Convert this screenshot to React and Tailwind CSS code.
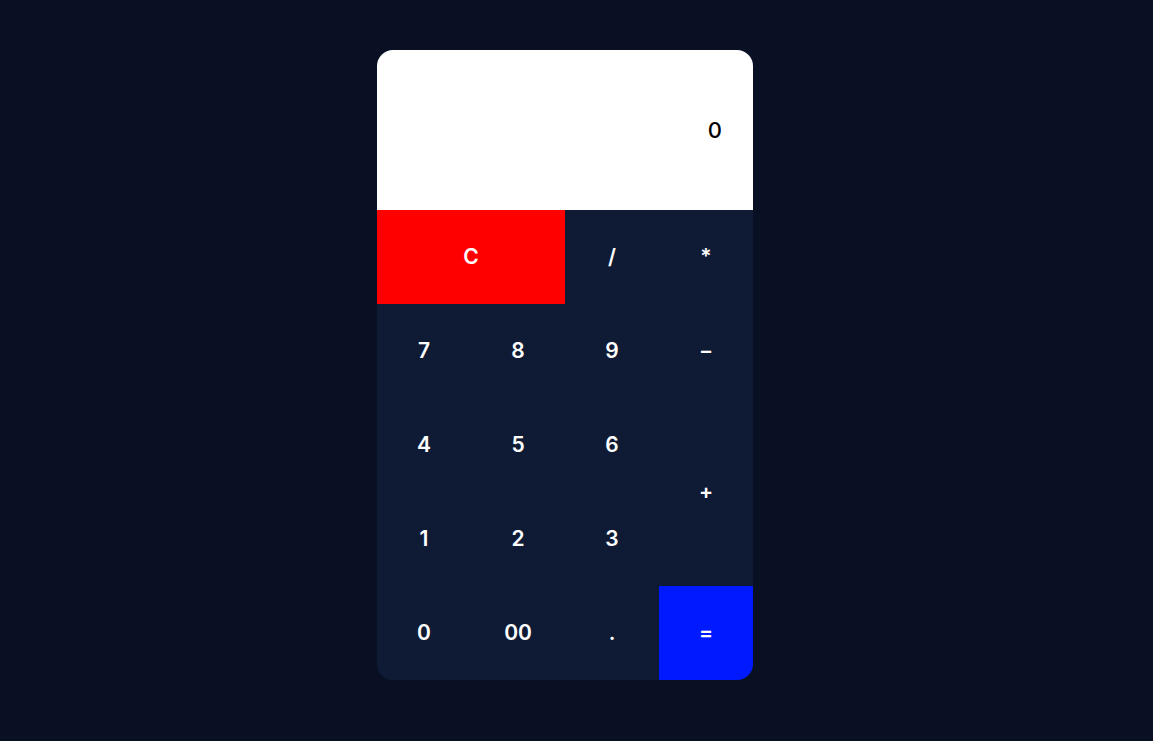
import React, { useState } from 'react';

const keys = [
  { label: 'C', cls: 'col-span-2 bg-[#ff0000]' },
  { label: '/' },
  { label: '*' },
  { label: '7' },
  { label: '8' },
  { label: '9' },
  { label: '−' },
  { label: '4' },
  { label: '5' },
  { label: '6' },
  { label: '+', cls: 'row-span-2' },
  { label: '1' },
  { label: '2' },
  { label: '3' },
  { label: '0' },
  { label: '00' },
  { label: '.' },
  { label: '=', cls: 'bg-[#001aff]' },
];

function App() {
  const [value] = useState('0');

  return (
    <div className="min-h-screen bg-[#0a1023] flex justify-center pt-[50px] pr-[23px]" style={{ fontFamily: 'Inter, "Noto Sans", sans-serif' }}>
      <div className="w-[376px] h-[630px] rounded-[16px] overflow-hidden bg-[#0f1b35] flex flex-col">
        <div className="h-[160px] bg-white flex items-center justify-end pr-[31px] text-[22px] font-medium text-black">
          {value}
        </div>
        <div className="grid grid-cols-4 auto-rows-[94px] flex-1">
          {keys.map((k, i) => (
            <button key={i}
              className={`flex items-center justify-center text-white text-[21px] font-semibold ${k.cls || ''}`}>
              {k.label}
            </button>
          ))}
        </div>
      </div>
    </div>
  );
}

export default App;
